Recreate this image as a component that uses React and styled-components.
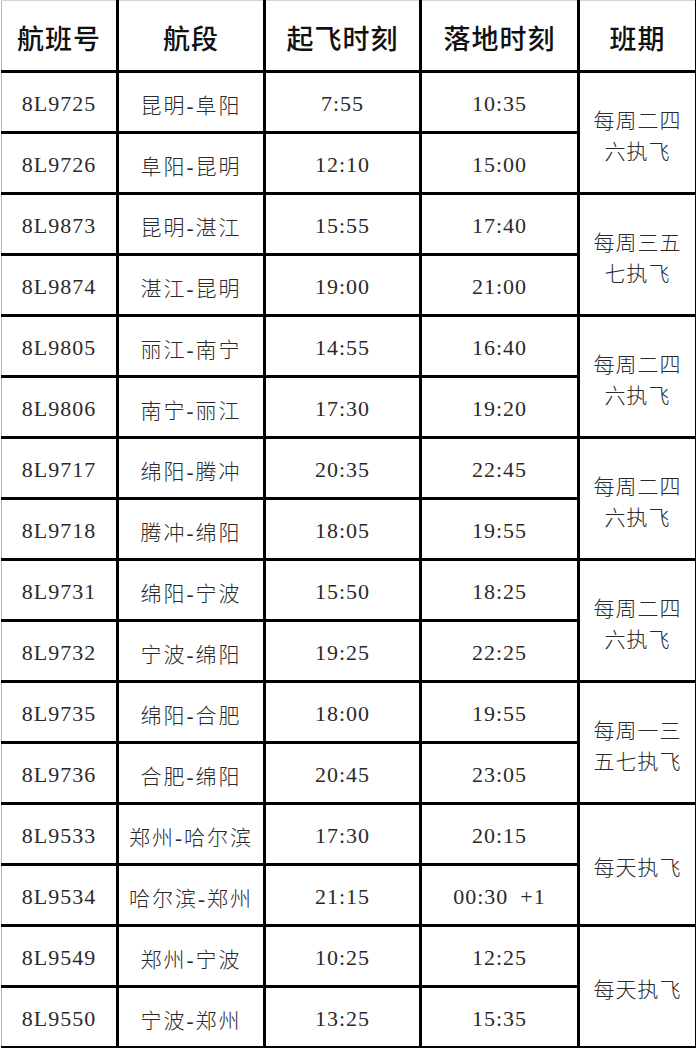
import styled, { createGlobalStyle } from "styled-components";

const Global = createGlobalStyle`
  html, body {
    margin: 0;
    padding: 0;
    background: #ffffff;
  }
`;

const Page = styled.div`
  width: 696px;
  height: 1048px;
  background: #fff;
  overflow: hidden;
`;

const Table = styled.table`
  border-collapse: collapse;
  table-layout: fixed;
  width: 695px;
  margin-left: 1px;
  font-family: "Liberation Serif", "Noto Sans CJK SC", serif;
  color: #222;
  border-top: 1px solid #d4d4d4;
  border-left: 1px solid #b8b8b8;
  border-right: 3px solid #000;
  border-bottom: 3px solid #000;
`;

const HeadRow = styled.tr`
  height: 71px;
`;

const Row = styled.tr`
  height: 61px;
`;

const HeadCell = styled.th`
  border: 3px solid #000;
  border-top: 1px solid #d4d4d4;
  font-family: "Noto Sans CJK SC", serif;
  font-size: 27px;
  font-weight: 500;
  color: #111;
  letter-spacing: 1px;
  padding: 4px 0 0;
  text-align: center;
  &:first-child {
    border-left: 1px solid #b8b8b8;
  }
`;

const Cell = styled.td`
  border: 3px solid #000;
  text-align: center;
  vertical-align: middle;
  padding: 4px 0 0;
  font-size: ${(p) => (p.$cjk ? "21px" : "22px")};
  font-weight: 300;
  color: #2a2a2a;
  letter-spacing: ${(p) => (p.$cjk ? "2px" : "1px")};
  white-space: nowrap;
  &:first-child {
    border-left: 1px solid #b8b8b8;
  }
`;

const ScheduleCell = styled.td`
  border: 3px solid #000;
  text-align: center;
  vertical-align: middle;
  padding: 4px 12px 0;
  font-family: "Noto Sans CJK SC", serif;
  font-size: 21px;
  font-weight: 300;
  letter-spacing: 1px;
  line-height: 31px;
  color: #2a2a2a;
`;

const Plus = styled.span`
  margin-left: 12px;
`;

const groups = [
  {
    days: "每周二四六执飞",
    flights: [
      ["8L9725", "昆明-阜阳", "7:55", "10:35"],
      ["8L9726", "阜阳-昆明", "12:10", "15:00"],
    ],
  },
  {
    days: "每周三五七执飞",
    flights: [
      ["8L9873", "昆明-湛江", "15:55", "17:40"],
      ["8L9874", "湛江-昆明", "19:00", "21:00"],
    ],
  },
  {
    days: "每周二四六执飞",
    flights: [
      ["8L9805", "丽江-南宁", "14:55", "16:40"],
      ["8L9806", "南宁-丽江", "17:30", "19:20"],
    ],
  },
  {
    days: "每周二四六执飞",
    flights: [
      ["8L9717", "绵阳-腾冲", "20:35", "22:45"],
      ["8L9718", "腾冲-绵阳", "18:05", "19:55"],
    ],
  },
  {
    days: "每周二四六执飞",
    flights: [
      ["8L9731", "绵阳-宁波", "15:50", "18:25"],
      ["8L9732", "宁波-绵阳", "19:25", "22:25"],
    ],
  },
  {
    days: "每周一三五七执飞",
    flights: [
      ["8L9735", "绵阳-合肥", "18:00", "19:55"],
      ["8L9736", "合肥-绵阳", "20:45", "23:05"],
    ],
  },
  {
    days: "每天执飞",
    flights: [
      ["8L9533", "郑州-哈尔滨", "17:30", "20:15"],
      ["8L9534", "哈尔滨-郑州", "21:15", "00:30", "+1"],
    ],
  },
  {
    days: "每天执飞",
    flights: [
      ["8L9549", "郑州-宁波", "10:25", "12:25"],
      ["8L9550", "宁波-郑州", "13:25", "15:35"],
    ],
  },
];

export default function App() {
  return (
    <Page>
      <Global />
      <Table>
        <colgroup>
          <col style={{ width: 116 }} />
          <col style={{ width: 147 }} />
          <col style={{ width: 156 }} />
          <col style={{ width: 158 }} />
          <col style={{ width: 118 }} />
        </colgroup>
        <thead>
          <HeadRow>
            <HeadCell>航班号</HeadCell>
            <HeadCell>航段</HeadCell>
            <HeadCell>起飞时刻</HeadCell>
            <HeadCell>落地时刻</HeadCell>
            <HeadCell>班期</HeadCell>
          </HeadRow>
        </thead>
        <tbody>
          {groups.map((g) =>
            g.flights.map((f, i) => (
              <Row key={f[0]}>
                <Cell>{f[0]}</Cell>
                <Cell $cjk>{f[1]}</Cell>
                <Cell>{f[2]}</Cell>
                <Cell>
                  {f[3]}
                  {f[4] && <Plus>{f[4]}</Plus>}
                </Cell>
                {i === 0 && <ScheduleCell rowSpan={2}>{g.days}</ScheduleCell>}
              </Row>
            ))
          )}
        </tbody>
      </Table>
    </Page>
  );
}
